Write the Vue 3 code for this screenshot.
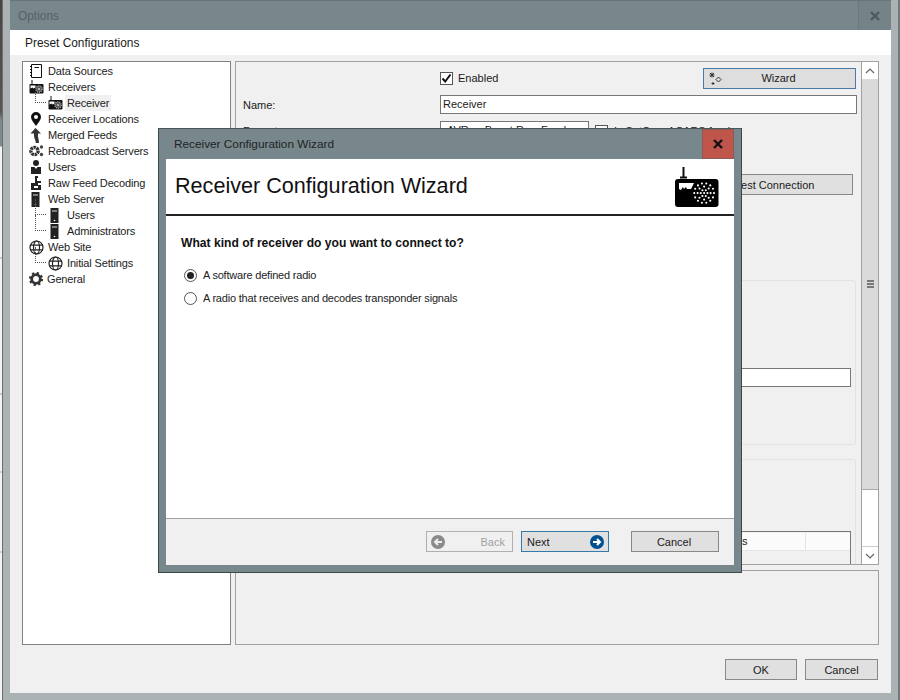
<script setup>
const tree = [
  { label: 'Data Sources', icon: 'doc', level: 0 },
  { label: 'Receivers', icon: 'radio', level: 0 },
  { label: 'Receiver', icon: 'radio', level: 1, selected: true, last: true },
  { label: 'Receiver Locations', icon: 'pin', level: 0 },
  { label: 'Merged Feeds', icon: 'merge', level: 0 },
  { label: 'Rebroadcast Servers', icon: 'gears', level: 0 },
  { label: 'Users', icon: 'user', level: 0 },
  { label: 'Raw Feed Decoding', icon: 'raw', level: 0 },
  { label: 'Web Server', icon: 'server', level: 0 },
  { label: 'Users', icon: 'server', level: 1 },
  { label: 'Administrators', icon: 'server', level: 1, last: true },
  { label: 'Web Site', icon: 'globe', level: 0 },
  { label: 'Initial Settings', icon: 'globe', level: 1, last: true },
  { label: 'General', icon: 'gear', level: 0 }
]
const dots = Array.from({ length: 29 }, (_, i) => {
  if (i === 0) return { x: 12, y: 12, r: 1 }
  const ring = i <= 6 ? 3.2 : i <= 14 ? 6.2 : 9.4
  const n = i <= 6 ? 6 : i <= 14 ? 8 : 14
  const start = i <= 6 ? 1 : i <= 14 ? 7 : 15
  const a = ((i - start) / n) * Math.PI * 2
  return { x: 12 + ring * Math.cos(a), y: 12 + ring * Math.sin(a), r: 1 }
})
</script>

<template>
  <div class="desktop">
    <div class="sliver"></div>
    <div class="options">
      <div class="win-title">
        <span class="win-title-text">Options</span>
        <span class="win-close">
          <svg width="10" height="10" viewBox="0 0 10 10"><path d="M1 1 9 9M9 1 1 9" stroke="#4f5a5d" stroke-width="2.4" /></svg>
        </span>
      </div>
      <div class="tabstrip">Preset Configurations</div>
      <div class="body">
        <div class="tree">
          <div v-for="(n, i) in tree" :key="i" class="node" :class="{ child: n.level === 1, general: n.icon === 'gear' }">
            <span v-if="n.level === 1" class="elbow"></span>
            <span class="ico">
              <svg v-if="n.icon === 'doc'" width="14" height="14" viewBox="0 0 14 14"><path d="M2.5.5h10v13h-10z" fill="#fff" stroke="#111" /><path d="M1 2.500h2M1 5.500h2M1 8.500h2M1 11.500h2M5.500 3.500h4.500" stroke="#111" fill="none" /></svg>
              <svg v-else-if="n.icon === 'radio'" width="15" height="14" viewBox="0 0 15 14"><path d="M3 0v4" stroke="#111" /><rect x="0.5" y="4" width="14" height="9.500" rx="1" fill="#111" /><path d="M1.500 5.500h5v2l-2 1-1-1-2 1z" fill="#fff" /><circle cx="10" cy="9" r="3.200" fill="#555" stroke="#aaa" stroke-dasharray="1 1" stroke-width="1.400" /><circle cx="10" cy="9" r="1" fill="#ccc" /></svg>
              <svg v-else-if="n.icon === 'pin'" width="12" height="14" viewBox="0 0 12 14"><path d="M6 0a5 5 0 0 1 5 5c0 3-3 6-5 9C4 11 1 8 1 5a5 5 0 0 1 5-5z" fill="#111" /><circle cx="6" cy="5" r="2" fill="#fff" /></svg>
              <svg v-else-if="n.icon === 'merge'" width="14" height="15" viewBox="0 0 14 15"><path d="M6.500 0 12 5.500H9V8c0 2 1 3 1 7H6.800C6.800 12 5 10.500 5 8V5.500H1.500z" fill="#333" /></svg>
              <svg v-else-if="n.icon === 'gears'" width="15" height="14" viewBox="0 0 15 14"><circle cx="5.500" cy="7" r="3.600" fill="none" stroke="#333" stroke-width="3.400" stroke-dasharray="2.400 .7" /><circle cx="5.500" cy="7" r="1.600" fill="#fff" /><circle cx="12.500" cy="3" r="1.700" fill="#444" /><circle cx="12.500" cy="10.500" r="1.700" fill="#444" /></svg>
              <svg v-else-if="n.icon === 'user'" width="12" height="14" viewBox="0 0 12 14"><circle cx="6" cy="3" r="3" fill="#222" /><path d="M1 7h3.500L6 9l1.500-2H11v7H1z" fill="#222" /></svg>
              <svg v-else-if="n.icon === 'raw'" width="12" height="14" viewBox="0 0 12 14"><path d="M5 0h3v2H7v3h4v2H8v2h3v5H1V7h4z" fill="#222" /><path d="M4 10h4v2H4z" fill="#fff" /></svg>
              <svg v-else-if="n.icon === 'server'" width="10" height="15" viewBox="0 0 10 15"><rect x="0.500" y="0" width="8" height="15" fill="#222" /><path d="M2 3h5" stroke="#ddd" /><circle cx="4.500" cy="12.500" r=".8" fill="#fff" /></svg>
              <svg v-else-if="n.icon === 'globe'" width="15" height="15" viewBox="0 0 15 15"><g fill="none" stroke="#222" stroke-width="1.200"><circle cx="7.500" cy="7.500" r="6.500" /><ellipse cx="7.500" cy="7.500" rx="3" ry="6.500" /><path d="M1 5.200h13M1 9.800h13" /></g></svg>
              <svg v-else width="14" height="14" viewBox="0 0 14 14"><circle cx="7" cy="7" r="4.300" fill="none" stroke="#333" stroke-width="2.800" /><circle cx="7" cy="7" r="6" fill="none" stroke="#333" stroke-width="2.200" stroke-dasharray="2.200 2.510" /></svg>
            </span>
            <span class="lbl" :class="{ sel: n.selected }">{{ n.label }}</span>
          </div>
        </div>
        <div class="rightcol">
          <div class="panel">
            <div class="form">
              <div class="row-enabled">
                <label class="chk">
                  <span class="box"><svg width="11" height="11" viewBox="0 0 11 11"><path d="M1.500 5.500 4.200 8.500 9.500 1.500" fill="none" stroke="#111" stroke-width="2" /></svg></span>
                  Enabled
                </label>
                <button class="btn wizard">
                  <svg width="13" height="13" viewBox="0 0 13 13" class="wand"><path d="M1 1l4 4M5 1 1 5M3 .5v5M.5 3h5" stroke="#333" /><path d="M9.500 5 12 7.500 9.500 10 7 7.500z" fill="none" stroke="#333" /><path d="M4 10v3M2.500 11.500h3" stroke="#333" /></svg>
                  Wizard
                </button>
              </div>
              <div class="row-name">
                <span class="name-lbl">Name:</span>
                <span class="input">Receiver</span>
              </div>
              <div class="row-format">
                <span class="name-lbl">Format:</span>
                <span class="select">AVR or Beast Raw Feed</span>
                <span class="box blank"></span>
                <span class="tail">Is SatCom ACARS feed</span>
              </div>
              <div class="row-test"><button class="btn test">Test Connection</button></div>
              <div class="group first"><span class="input wide"></span></div>
              <div class="group second">
                <div class="list"><div class="list-head"><span class="list-cell">s</span></div></div>
              </div>
            </div>
            <div class="vscroll">
              <span class="arrow"><svg width="10" height="6" viewBox="0 0 10 6"><path d="M1 5 5 1l4 4" fill="none" stroke="#666" stroke-width="1.200" /></svg></span>
              <span class="thumb"><i></i><i></i><i></i></span>
              <span class="track"></span>
              <span class="arrow down"><svg width="10" height="6" viewBox="0 0 10 6"><path d="M1 1l4 4 4-4" fill="none" stroke="#666" stroke-width="1.200" /></svg></span>
            </div>
          </div>
          <div class="desc"></div>
        </div>
      </div>
      <div class="actions">
        <button class="btn ok">OK</button>
        <button class="btn cancel">Cancel</button>
      </div>
    </div>

    <div class="wizard-win">
      <div class="wz-title">
        <span>Receiver Configuration Wizard</span>
        <span class="wz-close"><svg width="10" height="10" viewBox="0 0 10 10"><path d="M1 1 9 9M9 1 1 9" stroke="#111" stroke-width="2.400" /></svg></span>
      </div>
      <div class="wz-inner">
        <div class="wz-head">
          <h1>Receiver Configuration Wizard</h1>
          <svg class="wz-logo" width="44" height="42" viewBox="0 0 44 42">
            <path d="M8.500 2v10" stroke="#111" stroke-width="2" /><path d="M5 12.500h7" stroke="#111" stroke-width="2" />
            <rect x="0" y="14" width="43.500" height="28" rx="3" fill="#000" />
            <path d="M4 18h15l-3 6h-4l-1-2-2 2-1-2-2 3-2-1z" fill="#fff" />
            <g transform="translate(16.500 15.500) scale(1.050)">
              <circle v-for="(d, i) in dots" :key="i" :cx="d.x" :cy="d.y" :r="d.r" fill="#fff" />
            </g>
          </svg>
        </div>
        <div class="wz-main">
          <p class="q">What kind of receiver do you want to connect to?</p>
          <label class="radio"><span class="dot on"></span>A software defined radio</label>
          <label class="radio"><span class="dot"></span>A radio that receives and decodes transponder signals</label>
        </div>
        <div class="wz-foot">
          <button class="btn nav back">
            <svg width="14" height="14" viewBox="0 0 14 14"><circle cx="7" cy="7" r="7" fill="#8a8a8a" /><path d="M11 7H5M7 4 4 7l3 3" fill="none" stroke="#eee" stroke-width="2" /></svg>
            <span>Back</span>
          </button>
          <button class="btn nav next">
            <span>Next</span>
            <svg width="14" height="14" viewBox="0 0 14 14"><circle cx="7" cy="7" r="7" fill="#004f91" /><path d="M3 7h6M7 4l3 3-3 3" fill="none" stroke="#fff" stroke-width="2" /></svg>
          </button>
          <button class="btn wz-cancel">Cancel</button>
        </div>
      </div>
    </div>
  </div>
</template>

<style>
html, body { margin: 0; }
</style>

<style scoped>
.desktop { position: relative; width: 900px; height: 700px; overflow: hidden; display: flex; background: #6f7a7c; font-family: "Liberation Sans", Arial, sans-serif; font-size: 11px; color: #1a1a1a; }
.sliver { width: 3px; box-sizing: border-box; flex: none; border-right: 1px solid #6e6e6e; background: linear-gradient(#4a4543 0, #5a5552 112px, #7d8a8e 120px, #7d8a8e 146px, #f4f4f4 147px, #f4f4f4 257px, #999 258px, #f4f4f4 259px, #f4f4f4 393px, #999 394px, #f4f4f4 395px, #f4f4f4 471px, #aaa 472px, #f4f4f4 473px, #f4f4f4 551px, #aaa 552px, #f4f4f4 553px, #f4f4f4 100%); }
.options { height: 693px; width: 881px; flex: none; border-left: 7px solid #aab2b4; border-right: 7px solid #aab2b4; border-bottom: 7px solid #aab2b4; background: #f0f0f0; display: flex; flex-direction: column; box-sizing: content-box; }
.win-title { height: 30px; flex: none; background: #78878b; display: flex; justify-content: space-between; border-top: 1px solid #66757a; box-sizing: border-box; }
.win-title-text { color: #556266; padding: 8px 0 0 8px; font-size: 11.900px; }
.win-close { width: 32px; display: flex; align-items: center; justify-content: center; background: #748387; border-left: 1px solid #6b7a7e; }
.tabstrip { height: 25px; flex: none; background: #fff; padding: 6px 0 0 15px; box-sizing: border-box; font-size: 11.900px; }
.body { display: flex; padding: 6px 0 0 12px; height: 590px; box-sizing: border-box; flex: none; }
.tree { width: 209px; height: 584px; box-sizing: border-box; border: 1px solid #828282; background: #fff; padding: 1px 0 0 5px; flex: none; }
.node { height: 16px; display: flex; align-items: center; position: relative; }
.node.child { padding-left: 19px; }
.ico { width: 16px; height: 16px; flex: none; display: flex; align-items: center; justify-content: center; }
.lbl { padding: 1px 3px; margin-left: 1px; line-height: 14px; white-space: nowrap; letter-spacing: -.15px; color: #222; }
.lbl.sel { background: #f0f0f0; }
.node.child .lbl { margin-left: 2px; padding: 1px 2px; }
.node.general .lbl { margin-left: 0; }
.elbow { position: absolute; left: 7px; top: -8px; width: 11px; height: 16px; border-left: 1px dotted #555; border-bottom: 1px dotted #555; box-sizing: border-box; }
.rightcol { margin-left: 4px; width: 644px; display: flex; flex-direction: column; gap: 5px; flex: none; }
.panel { height: 504px; box-sizing: border-box; border: 1px solid #a0a0a0; display: flex; overflow: hidden; position: relative; flex: none; }
.form { flex: 1; min-width: 0; padding: 5px 5px 0 7px; }
.row-enabled { display: flex; justify-content: space-between; align-items: center; height: 22px; padding-left: 197px; }
.chk { display: flex; align-items: center; gap: 5px; }
.box { width: 11px; height: 11px; border: 1px solid #555; background: #fff; display: flex; align-items: center; justify-content: center; flex: none; }
.btn { font: inherit; color: #1a1a1a; border: 1px solid #888; background: #e0e0e0; box-sizing: border-box; padding: 0; text-align: center; border-radius: 0; }
.wizard { width: 153px; height: 21px; border-color: #4a7ba6; background: #dedede; position: relative; margin-right: 1px; padding-right: 2px; }
.wand { position: absolute; left: 5px; top: 3px; }
.row-name { display: flex; align-items: center; margin-top: 6px; height: 19px; }
.name-lbl { width: 197px; flex: none; }
.input { display: block; flex: 1; height: 19px; box-sizing: border-box; border: 1px solid #777; background: #fff; padding: 1px 2px; line-height: 15px; }
.row-format { display: flex; align-items: center; margin-top: 7px; height: 20px; }
.select { width: 149px; height: 20px; box-sizing: border-box; border: 1px solid #777; background: #fff; padding: 2px 6px; flex: none; white-space: nowrap; overflow: hidden; }
.blank { margin-left: 6px; width: 11px; height: 11px; }
.tail { margin-left: 6px; }
.row-test { display: flex; justify-content: flex-end; margin-top: 33px; padding-right: 4px; }
.test { width: 156px; height: 21px; }
.group { border: 1px solid #e2e2e2; border-radius: 3px; box-sizing: border-box; margin-right: 1px; position: relative; }
.group.first { margin-top: 85px; height: 165px; padding: 87px 4px 0 300px; }
.wide { height: 19px; }
.group.second { margin-top: 14px; height: 120px; padding: 71px 4px 0 300px; }
.list { border: 1px solid #777; border-bottom: 0; height: 60px; background: #f0f0f0; }
.list-head { height: 17px; background: #fbfbfb; border-bottom: 1px solid #e4e4e4; margin: 1px 0 0; }
.list-cell { display: block; width: 261px; height: 17px; border-right: 1px solid #e4e4e4; box-sizing: border-box; line-height: 16px; padding-left: 197px; }
.vscroll { width: 16px; flex: none; display: flex; flex-direction: column; background: #fff; border-left: 1px solid #a0a0a0; margin-left: -1px; }
.arrow { height: 17px; flex: none; display: flex; align-items: center; justify-content: center; background: #fff; }
.arrow.down { border-top: 1px solid #ccc; }
.thumb { height: 411px; flex: none; background: #dadada; display: flex; flex-direction: column; align-items: center; justify-content: center; gap: 1px; border-bottom: 1px solid #aaa; box-sizing: border-box; }
.thumb i { width: 7px; height: 2px; background: #777; }
.track { flex: 1; }
.desc { height: 75px; box-sizing: border-box; border: 1px solid #a0a0a0; flex: none; }
.actions { display: flex; justify-content: flex-end; gap: 8px; padding: 14px 13px 0 0; }
.ok { width: 72px; height: 21px; }
.cancel { width: 73px; height: 21px; }

.wizard-win { position: absolute; left: 158px; top: 128px; width: 584px; height: 445px; box-sizing: border-box; border: 1px solid #3c4749; border-top-color: #4a5659; background: #78878b; padding: 0 7px 7px; display: flex; flex-direction: column; }
.wz-title { height: 30px; flex: none; margin: 0 -7px; padding-left: 15px; display: flex; align-items: center; justify-content: space-between; color: #1d2426; font-size: 11.800px; }
.wz-close { width: 32px; height: 30px; margin-right: 7px; background: #c0564b; border: 1px solid #8d5a55; box-sizing: border-box; display: flex; align-items: center; justify-content: center; }
.wz-inner { flex: 1; display: flex; flex-direction: column; background: #fff; min-height: 0; }
.wz-head { height: 57px; flex: none; box-sizing: border-box; border-bottom: 2px solid #222; display: flex; align-items: flex-start; justify-content: space-between; padding: 0 15px 0 9px; }
.wz-head h1 { margin: 14px 0 0; font-weight: 400; font-size: 21.600px; line-height: 25px; color: #111; }
.wz-logo { margin-top: 6px; }
.wz-main { flex: 1; padding: 20px 15px 0; }
.q { margin: 0 0 18px; font-weight: 700; font-size: 12.100px; color: #111; line-height: 14px; }
.radio { display: flex; align-items: center; gap: 6px; height: 14px; margin: 0 0 9px 3px; line-height: 14px; color: #222; letter-spacing: -.2px; }
.dot { width: 11px; height: 11px; border: 1px solid #555; border-radius: 50%; background: #fff; display: flex; align-items: center; justify-content: center; flex: none; }
.dot.on::after { content: ""; width: 7px; height: 7px; border-radius: 50%; background: #222; }
.wz-foot { height: 47px; flex: none; box-sizing: border-box; border-top: 1px solid #a0a0a0; background: #f0f0f0; display: flex; align-items: flex-start; padding: 12px 15px 0 260px; }
.nav { width: 88px; height: 21px; display: flex; align-items: center; justify-content: space-between; padding: 0 4px; }
.back { width: 87px; margin-right: 8px; color: #a0a0a0; background: #f0f0f0; border-color: #b0b0b0; padding-right: 7px; }
.next { border-color: #3a78a8; background: #e0e0e0; padding-left: 5px; }
.wz-cancel { width: 88px; height: 21px; margin-left: 22px; padding-right: 2px; }
</style>
